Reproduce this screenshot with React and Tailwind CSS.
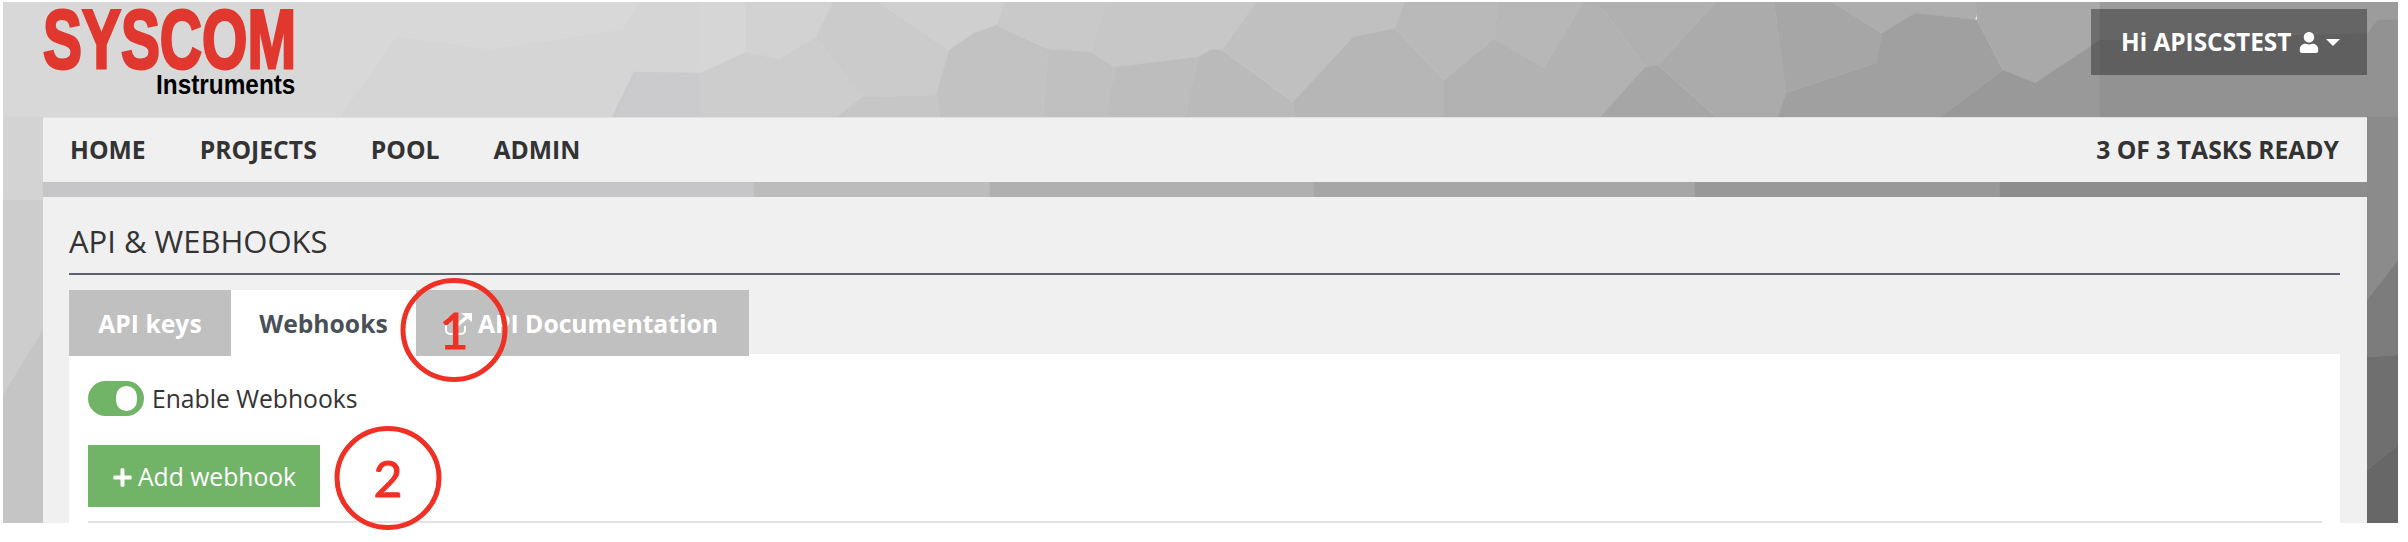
import { FaPlus, FaUser } from 'react-icons/fa';

const FACETS = [
  ['#d8d8d8', '0,0 700,0 700,120 0,120'],
  ['#d5d5d5', '397,37 491,50 623,30 640,2 700,2 700,73 634,72 612,117 340,117'],
  ['#cbcbcd', '634,72 700,73 700,117 612,117'],
  ['#d6d6d6', '700,2 746,2 746,52 700,73'],
  ['#d2d2d2', '746,2 833,2 816,37 779,59 746,52'],
  ['#cdcdcd', '700,73 746,52 779,59 816,37 862,97 837,117 700,117'],
  ['#cbcbcb', '833,2 878,2 949,50 936,95 862,97 816,37'],
  ['#cfcfcf', '878,2 1005,2 997,25 974,33 949,50'],
  ['#c6c6c6', '862,97 936,95 940,117 837,117'],
  ['#c2c2c2', '949,50 974,33 997,25 1048,49 1042,117 940,117 936,95'],
  ['#c9c9c9', '1005,2 1106,2 1091,52 1048,49 997,25'],
  ['#c0c0c0', '1048,49 1091,52 1115,67 1106,117 1042,117'],
  ['#c7c7c7', '1106,2 1256,2 1222,50 1210,50 1198,57 1115,67 1091,52'],
  ['#bdbdbd', '1115,67 1198,57 1185,117 1106,117'],
  ['#bababa', '1198,57 1210,50 1222,50 1293,102 1295,117 1185,117'],
  ['#c0c0c0', '1256,2 1405,2 1395,28 1353,37 1293,102 1222,50'],
  ['#b6b6b6', '1395,28 1353,37 1293,102 1295,117 1444,117 1444,80'],
  ['#b9b9b9', '1405,2 1498,2 1494,39 1444,80 1395,28'],
  ['#b7b7b7', '1498,2 1583,2 1544,68 1494,39'],
  ['#b2b2b2', '1494,39 1544,68 1583,2 1604,10 1645,67 1600,117 1444,117 1444,80'],
  ['#b0b0b0', '1583,2 1716,2 1658,65 1645,67 1604,10'],
  ['#a6a6a6', '1645,67 1658,65 1716,117 1600,117'],
  ['#ababab', '1716,2 1774,2 1786,93 1778,117 1716,117 1658,65'],
  ['#a6a6a6', '1774,2 1832,2 1882,33 1876,63 1786,93'],
  ['#adadad', '1832,2 1981,2 1975,20 1915,13 1882,33'],
  ['#a0a0a0', '1882,33 1915,13 1977,20 2003,70 1940,117 1778,117 1786,93 1876,63'],
  ['#a9a9a9', '1977,2 2100,2 2100,40 2035,83 2003,70 1977,20'],
  ['#999999', '1940,117 2003,70 2035,83 2100,40 2100,117'],
  ['#9c9c9c', '2100,2 2398,2 2398,20 2377,20 2367,33 2100,40'],
  ['#929292', '2100,40 2367,33 2377,20 2398,20 2398,117 2100,117'],
  ['#d3d3d3', '0,117 43,117 43,200 0,200'],
  ['#cdcdcd', '0,200 43,200 43,330 0,400'],
  ['#c5c5c5', '0,400 43,330 43,523 0,523'],
  ['#c6c6c8', '43,182 754,182 754,197 43,197'],
  ['#bcbcbc', '754,182 990,182 990,197 754,197'],
  ['#b0b0b0', '990,182 1314,182 1314,197 990,197'],
  ['#a6a6a6', '1314,182 1695,182 1695,197 1314,197'],
  ['#989898', '1695,182 2000,182 2000,197 1695,197'],
  ['#8d8d8d', '2000,182 2367,182 2367,197 2000,197'],
  ['#8b8b8b', '2367,117 2398,117 2398,260 2367,300'],
  ['#7c7c7c', '2367,300 2398,260 2398,355 2367,357'],
  ['#6f6f6f', '2367,357 2398,355 2398,445 2367,470'],
  ['#676767', '2367,470 2398,445 2398,523 2367,523'],
];

const PolyBackground = () => (
  <svg className="absolute top-0 left-0" width="2408" height="542" viewBox="3 2 2408 542">
    {FACETS.map(([fill, points], i) => (
      <polygon key={i} fill={fill} stroke={fill} strokeWidth="0.5" points={points} />
    ))}
  </svg>
);

const Logo = () => (
  <div className="relative w-[260px] h-[90px] font-['Liberation_Sans',sans-serif] font-bold">
    <span className="absolute left-0 top-0 origin-top-left scale-x-[0.695] text-[84px] leading-[60px] text-[#e0382f] whitespace-nowrap [-webkit-text-stroke:3px_#e0382f]">
      SYSCOM
    </span>
    <span className="absolute left-[113px] top-[65px] origin-top-left scale-x-[0.87] text-[28px] leading-[22px] text-black whitespace-nowrap">
      Instruments
    </span>
  </div>
);

const NavLink = ({ children }) => <a className="text-[#333333]">{children}</a>;

const ExternalIcon = () => (
  <svg width="27" height="22" viewBox="0 0 27 22" fill="none" stroke="#ffffff" className="shrink-0">
    <path d="M20 13v4a4 4 0 0 1-4 4H5a4 4 0 0 1-4-4V9a4 4 0 0 1 4-4h6" strokeWidth="2" />
    <path d="M10 14 22 4" strokeWidth="3.5" />
    <path d="M16 0h11v9z" fill="#ffffff" stroke="none" />
  </svg>
);

const Annotation = ({ className, label }) => (
  <div className={`absolute z-20 w-[108px] h-[104px] flex items-center justify-center ${className}`}>
    <svg className="absolute inset-0" width="108" height="104" viewBox="0 0 108 104" fill="none">
      <ellipse cx="54" cy="52" rx="51" ry="49.5" stroke="#ee3124" strokeWidth="5" />
    </svg>
    <span className="relative font-['Lato',sans-serif] text-[50px] leading-none text-[#ee3124] [-webkit-text-stroke:1px_#ee3124]">
      {label}
    </span>
  </div>
);

const App = () => {
  return (
    <div className="relative w-[2408px] h-[542px] bg-white overflow-hidden font-['Open_Sans',sans-serif] text-[24.7px]">
      <div className="relative ml-[3px] mt-[2px] w-[2395px] h-[521px] overflow-hidden pl-[40px] pr-[31px] flex flex-col">
        <PolyBackground />
        <header className="relative h-[115px] flex justify-between items-start">
          <div className="pt-[7px]"><Logo /></div>
          <button className="mt-[7px] w-[276px] h-[66px] bg-black/35 text-white text-[24.4px] font-bold flex items-center pl-[30px] gap-[8px]">
            Hi APISCSTEST
            <FaUser className="w-[20px] h-[21px]" />
            <span className="ml-[-1px] w-0 h-0 border-x-[7px] border-x-transparent border-t-[7px] border-t-white" />
          </button>
        </header>

        <nav className="relative h-[65px] bg-[#f0f0f0] flex items-center justify-between pl-[27px] pr-[28px] font-bold border-t border-[#e0e0e0]">
          <div className="flex gap-[54px]">
            <NavLink>HOME</NavLink>
            <NavLink>PROJECTS</NavLink>
            <NavLink>POOL</NavLink>
            <NavLink>ADMIN</NavLink>
          </div>
          <span className="text-[#333333]">3 OF 3 TASKS READY</span>
        </nav>

        <main className="relative mt-[15px] flex-1 bg-[#f0f0f0] pl-[26px] pr-[27px] flex flex-col min-h-0">
          <h1 className="h-[79px] pt-[23px] text-[31px] leading-[42px] text-[#333333] border-b-2 border-[#5c6370]">
            API &amp; WEBHOOKS
          </h1>
          <div className="mt-[15px] flex h-[66px] font-bold relative z-10 shrink-0">
            <div className="w-[162px] pt-[2px] bg-[#c0c0c0] text-white flex items-center justify-center">API keys</div>
            <div className="w-[185px] pt-[2px] bg-white text-[#495057] flex items-center justify-center">Webhooks</div>
            <div className="w-[333px] pt-[2px] bg-[#c0c0c0] text-white flex items-center gap-[6px] pl-[29px]">
              <ExternalIcon />
              API Documentation
            </div>
          </div>
          <section className="mt-[-2px] flex-1 bg-white pl-[19px] pr-[18px] pt-[27px] text-[#333333] flex flex-col">
            <label className="flex items-center gap-[8px] h-[35px]">
              <span className="w-[56px] h-[35px] rounded-full bg-[#72b467] flex items-center justify-end pr-[7px]">
                <span className="w-[21px] h-[25px] rounded-full bg-white" />
              </span>
              Enable Webhooks
            </label>
            <button className="mt-[29px] w-[232px] h-[62px] pt-[2px] bg-[#72b467] text-white flex items-center justify-center gap-[5px]">
              <FaPlus className="w-[21px] h-[21px]" />
              Add webhook
            </button>
            <div className="mt-[14px] border-t-2 border-[#e2e2e2]" />
          </section>
        </main>
      </div>
      <Annotation className="left-[400px] top-[278px]" label="1" />
      <Annotation className="left-[334px] top-[426px]" label="2" />
    </div>
  );
};

export default App;
